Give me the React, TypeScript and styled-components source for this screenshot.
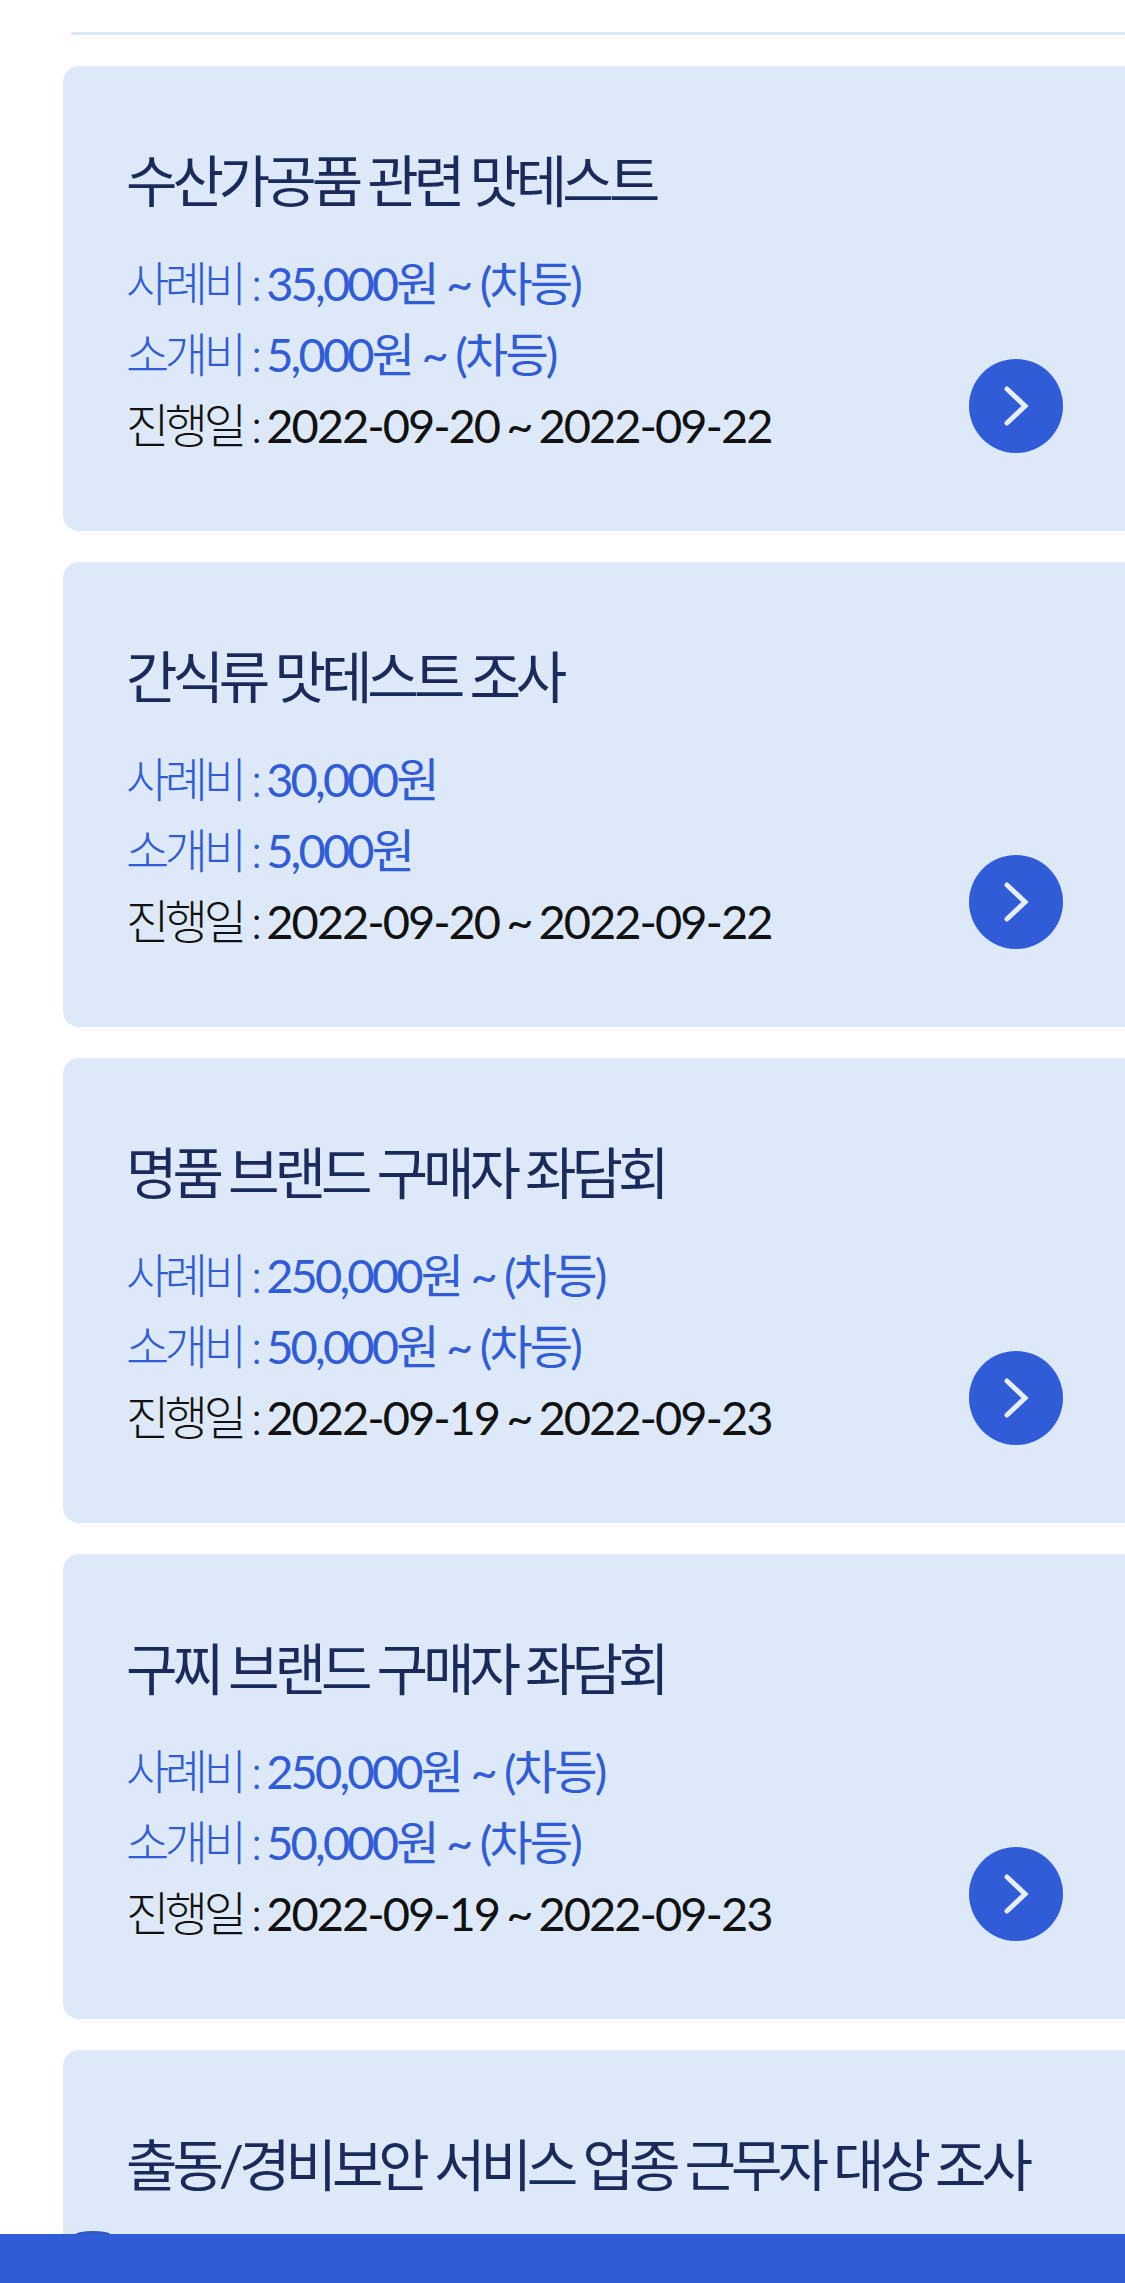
import styled, { createGlobalStyle } from 'styled-components';

const GlobalStyle = createGlobalStyle`
    html, body {
        margin: 0;
        padding: 0;
        height: 100%;
        overflow: hidden;
        background-color: #fff;
    }
    * {
        box-sizing: border-box;
    }
`;

const Wrapper = styled.main`
    display: flex;
    flex-direction: column;
    gap: 31px;
    width: 1125px;
    height: 2283px;
    padding: 32px 0 0 63px;
    overflow: hidden;
    font-family: Lato, 'Noto Sans CJK KR', sans-serif;
`;

const TopLine = styled.div`
    flex-shrink: 0;
    height: 3px;
    margin-left: 8px;
    border-radius: 0 0 0 6px;
    background-color: #dde8f9;
`;

const Card = styled.article`
    display: flex;
    flex-shrink: 0;
    justify-content: space-between;
    height: 465px;
    padding: 76px 62px 0 63px;
    border-radius: 16px 0 0 16px;
    background-color: #dde8f9;
`;

const Info = styled.div`
    display: flex;
    flex-direction: column;
`;

const Title = styled.h2`
    margin: 0 0 28px;
    color: #1a2a5a;
    font-size: 56px;
    font-weight: 400;
    line-height: 78px;
    letter-spacing: -5.1px;
    white-space: nowrap;
`;

const Line = styled.p<{ $dark?: boolean }>`
    margin: 0;
    color: ${(props) => (props.$dark ? '#111' : '#305cd8')};
    font-size: 47px;
    line-height: 71px;
    letter-spacing: ${(props) => (props.$dark ? '-2px' : '-2.8px')};
    word-spacing: ${(props) => (props.$dark ? '-3px' : '0')};
    white-space: nowrap;
`;

const Label = styled.span`
    font-weight: 300;
    letter-spacing: -4.4px;
    word-spacing: 0;
`;

const ArrowButton = styled.button`
    display: flex;
    flex-shrink: 0;
    justify-content: center;
    align-items: center;
    width: 94px;
    height: 94px;
    margin-top: 217px;
    padding: 0;
    border: 0;
    border-radius: 50%;
    background-color: #305cd8;
`;

const BottomBar = styled.div`
    position: fixed;
    left: 0;
    bottom: 0;
    width: 100%;
    height: 49px;
    background-color: #305cd8;

    &::before {
        content: '';
        position: absolute;
        top: -3px;
        left: 76px;
        width: 34px;
        height: 3px;
        border-radius: 50% 50% 0 0 / 100% 100% 0 0;
        background-color: #2f55c4;
    }
`;

const surveys = [
    { title: '수산가공품 관련 맛테스트', fee: '35,000원 ~ (차등)', referral: '5,000원 ~ (차등)', period: '2022-09-20 ~ 2022-09-22' },
    { title: '간식류 맛테스트 조사', fee: '30,000원', referral: '5,000원', period: '2022-09-20 ~ 2022-09-22' },
    { title: '명품 브랜드 구매자 좌담회', fee: '250,000원 ~ (차등)', referral: '50,000원 ~ (차등)', period: '2022-09-19 ~ 2022-09-23' },
    { title: '구찌 브랜드 구매자 좌담회', fee: '250,000원 ~ (차등)', referral: '50,000원 ~ (차등)', period: '2022-09-19 ~ 2022-09-23' },
    { title: '출동/경비보안 서비스 업종 근무자 대상 조사', fee: '', referral: '', period: '' },
];

function App() {
    return (
        <>
            <GlobalStyle />
            <Wrapper>
                <TopLine />
                {surveys.map((survey) => (
                    <Card key={survey.title}>
                        <Info>
                            <Title>{survey.title}</Title>
                            {survey.fee && (
                                <>
                                    <Line>
                                        <Label>사례비 : </Label>
                                        {survey.fee}
                                    </Line>
                                    <Line>
                                        <Label>소개비 : </Label>
                                        {survey.referral}
                                    </Line>
                                    <Line $dark>
                                        <Label>진행일 : </Label>
                                        {survey.period}
                                    </Line>
                                </>
                            )}
                        </Info>
                        <ArrowButton aria-label="자세히 보기">
                            <svg width="30" height="46" viewBox="0 0 30 46" fill="none">
                                <path d="M6 6 L24 23 L6 40" stroke="#e6edfb" strokeWidth="5" strokeLinecap="round" />
                            </svg>
                        </ArrowButton>
                    </Card>
                ))}
            </Wrapper>
            <BottomBar />
        </>
    );
}

export default App;
